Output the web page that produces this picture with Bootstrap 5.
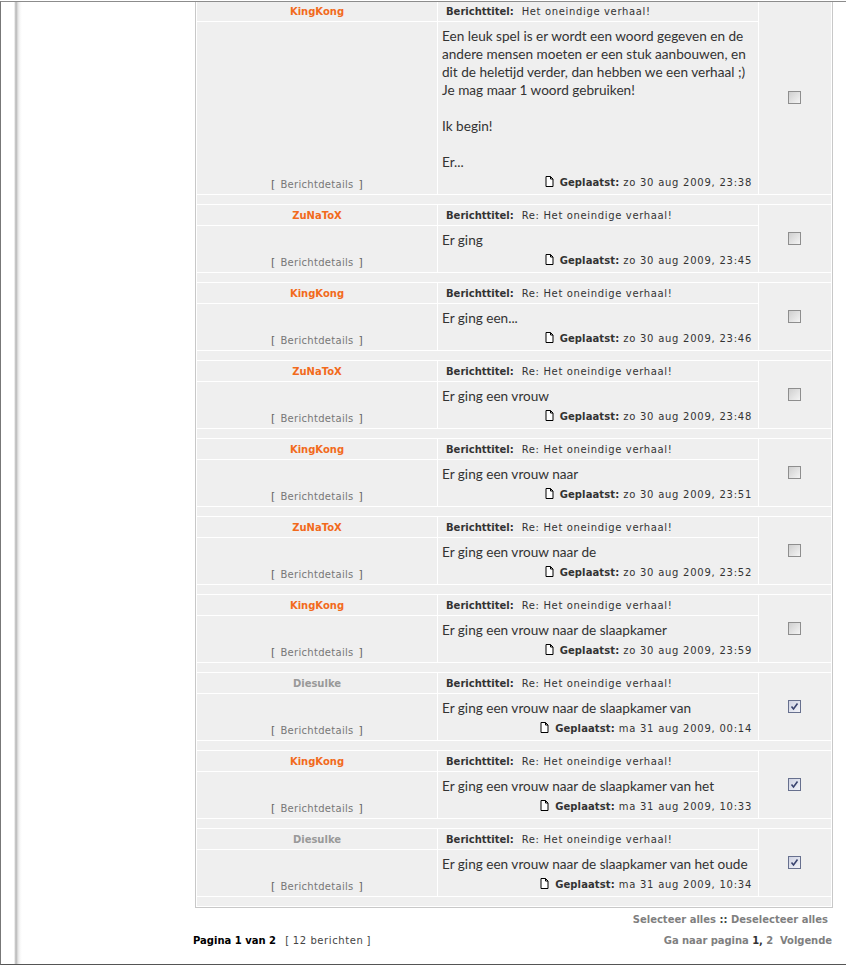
<!DOCTYPE html>
<html lang="nl">
<head>
  <meta charset="UTF-8" />
  <meta name="viewport" content="width=device-width, initial-scale=1.0"/>
  <title>Het oneindige verhaal!</title>
  <link href="https://cdn.jsdelivr.net/npm/bootstrap@5.3.2/dist/css/bootstrap.min.css" rel="stylesheet" />
  <style>
    html, body { height: 966px; overflow: hidden; }
    body {
      background: #fff;
      font-family: "DejaVu Sans", Verdana, sans-serif;
      font-size: 10px;
      line-height: 14px;
      color: #333;
    }
    .page-frame {
      margin-top: 1px;
      height: 964px;
      border-top: 1px solid #8c8c8c;
      border-left: 1px solid #777;
      border-bottom: 1px solid #555;
      overflow: hidden;
    }
    .side-strip {
      width: 192px;
      flex: none;
      background: linear-gradient(to right, #fff 13px, #d8d8d8 14px, #b4b4b4 15px, #e4e4e4 17px, #f8f8f8 19px, #fff 21px);
    }
    .main-col { width: 640px; flex: none; overflow: hidden; }
    .post-table {
      width: 638px;
      margin: -3px 0 0 2px;
      table-layout: fixed;
      border-collapse: separate;
      border-spacing: 1px;
      border: 1px solid #c8c8c8;
      background: #fff;
    }
    .post-table td { background: #efefef; padding: 0; }
    .cell-author {
      height: 20px;
      padding-top: 1px !important;
      text-align: center;
      font-weight: 700;
      vertical-align: middle;
    }
    .author-orange { color: #f26a1c; }
    .author-grey { color: #999; }
    .cell-subject { padding: 1px 0 0 8px !important; vertical-align: middle; white-space: nowrap; letter-spacing: .65px; }
    .cell-subject b { margin-right: 4px; color: #333; letter-spacing: 0; }
    .cell-details { text-align: center; vertical-align: bottom; padding-bottom: 2px !important; color: #666; font-size: 11px; }
    .cell-details span { color: #777; margin: 0 5px; font-size: 10px; letter-spacing: .3px; }
    .cell-body { padding: 4px 6px 4px 4px !important; }
    .post-text {
      font-family: Lato, "Noto Sans", sans-serif;
      font-size: 13.6px;
      line-height: 18px;
      color: #333;
      white-space: pre;
      margin-top: 1px;
    }
    .post-time { text-align: right; margin-top: 5px; white-space: nowrap; letter-spacing: .75px; }
    .post-time b { letter-spacing: .1px; }
    .post-time svg { margin-right: 6px; vertical-align: -1px; }
    .cell-check { padding-right: 2px !important; text-align: center; vertical-align: middle; }
    .spacer-cell { height: 9px; }
    .pick-box {
      appearance: none;
      display: inline-block;
      width: 13px;
      height: 13px;
      margin: 0;
      vertical-align: middle;
      border: 1px solid #8e8e8e;
      background: linear-gradient(135deg, #cfcfcf, #f4f4f4);
    }
    .pick-box:checked {
      border-color: #67708e;
      background: url("data:image/svg+xml,%3Csvg xmlns='http://www.w3.org/2000/svg' viewBox='0 0 11 11'%3E%3Cpath d='M2.5 5.5 4.5 8 8.5 2.5' fill='none' stroke='%233a4470' stroke-width='1.6'/%3E%3C/svg%3E") center/11px no-repeat, linear-gradient(135deg, #cfd3e4, #f2f3f8);
    }
    .select-line { height: 21px; padding: 5px 5px 0 0; text-align: right; font-weight: 700; color: #7f7f7f; }
    .select-line span { color: #444; }
    .pager-line { padding: 5px 1px 0 0; }
    .pager-count { margin-left: 6px; color: #444; letter-spacing: .6px; }
    .pager-count span { margin: 0 3px; }
    .pager-links { font-weight: 700; color: #7f7f7f; letter-spacing: -.06px; }
    .pager-links span { color: #333; }
  </style>
</head>
<body class="m-0">
  <div class="page-frame d-flex">
    <div class="side-strip"></div>
    <div class="main-col">
      <table class="post-table">
        <colgroup><col style="width:240px"><col style="width:320px"><col style="width:72px"></colgroup>
        <tbody id="postRows"></tbody>
      </table>
      <div class="select-line">Selecteer alles <span>::</span> Deselecteer alles</div>
      <div class="pager-line d-flex justify-content-between">
        <div><b class="text-black">Pagina 1 van 2</b> <span class="pager-count">[<span>12 berichten</span>]</span></div>
        <div class="pager-links">Ga naar pagina <span>1,</span> 2&nbsp; Volgende</div>
      </div>
    </div>
  </div>

  <script>
    const posts = [
      ["KingKong", "Het oneindige verhaal!", "Een leuk spel is er wordt een woord gegeven en de\nandere mensen moeten er een stuk aanbouwen, en\ndit de heletijd verder, dan hebben we een verhaal ;)\nJe mag maar 1 woord gebruiken!\n\nIk begin!\n\nEr...", "zo 30 aug 2009, 23:38", false],
      ["ZuNaToX", "Re: Het oneindige verhaal!", "Er ging", "zo 30 aug 2009, 23:45", false],
      ["KingKong", "Re: Het oneindige verhaal!", "Er ging een...", "zo 30 aug 2009, 23:46", false],
      ["ZuNaToX", "Re: Het oneindige verhaal!", "Er ging een vrouw", "zo 30 aug 2009, 23:48", false],
      ["KingKong", "Re: Het oneindige verhaal!", "Er ging een vrouw naar", "zo 30 aug 2009, 23:51", false],
      ["ZuNaToX", "Re: Het oneindige verhaal!", "Er ging een vrouw naar de", "zo 30 aug 2009, 23:52", false],
      ["KingKong", "Re: Het oneindige verhaal!", "Er ging een vrouw naar de slaapkamer", "zo 30 aug 2009, 23:59", false],
      ["Diesulke", "Re: Het oneindige verhaal!", "Er ging een vrouw naar de slaapkamer van", "ma 31 aug 2009, 00:14", true],
      ["KingKong", "Re: Het oneindige verhaal!", "Er ging een vrouw naar de slaapkamer van het", "ma 31 aug 2009, 10:33", true],
      ["Diesulke", "Re: Het oneindige verhaal!", "Er ging een vrouw naar de slaapkamer van het oude", "ma 31 aug 2009, 10:34", true]
    ];

    const postIcon = `<svg width="9" height="11" viewBox="0 0 9 11"><path d="M1 .5h4.5L8 3v7.5H1z" fill="#fff" stroke="#000"/><path d="M5.5 .5V3H8" fill="none" stroke="#000"/></svg>`;

    document.getElementById("postRows").innerHTML = posts.map(([author, subject, text, time, checked]) => `
      <tr>
        <td class="cell-author ${author === "Diesulke" ? "author-grey" : "author-orange"}">${author}</td>
        <td class="cell-subject"><b>Berichttitel:</b> ${subject}</td>
        <td class="cell-check" rowspan="2"><input class="pick-box" type="checkbox" ${checked ? "checked" : ""}></td>
      </tr>
      <tr>
        <td class="cell-details">[<span>Berichtdetails</span>]</td>
        <td class="cell-body">
          <div class="post-text">${text}</div>
          <div class="post-time">${postIcon}<b>Geplaatst:</b> ${time}</div>
        </td>
      </tr>
      <tr><td class="spacer-cell" colspan="3"></td></tr>
    `).join("");
  </script>
  <script src="https://cdn.jsdelivr.net/npm/bootstrap@5.3.2/dist/js/bootstrap.bundle.min.js"></script>
</body>
</html>
